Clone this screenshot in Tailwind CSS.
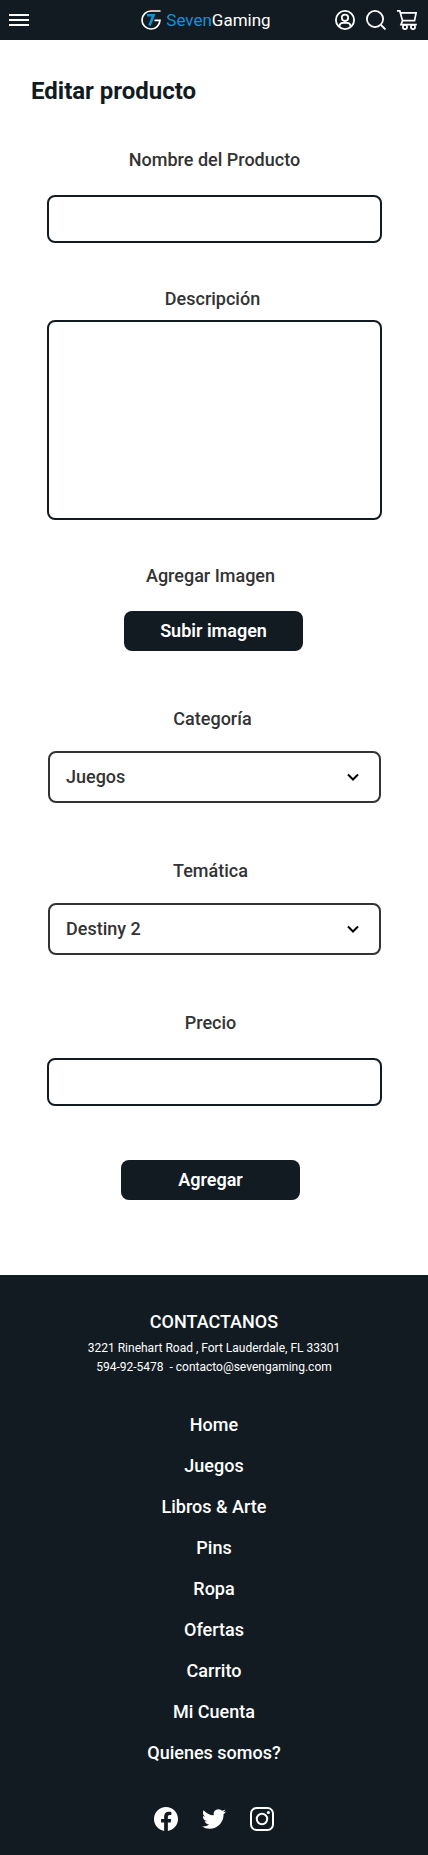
<!DOCTYPE html>
<html lang="es">
<head>
<meta charset="utf-8">
<meta name="viewport" content="width=device-width, initial-scale=1">
<title>SevenGaming - Editar producto</title>
<script src="https://cdn.jsdelivr.net/npm/@tailwindcss/browser@4"></script>
</head>
<body class="bg-white font-['Roboto',sans-serif] text-lg/6 font-medium text-[#333333]">

<header class="grid h-10 grid-cols-[1fr_auto_1fr] items-center bg-[#131b22] pr-[11px] pl-[9px] text-white">
  <button type="button" aria-label="Menú" class="flex h-5 w-5 items-center">
    <svg class="h-5 w-5" viewBox="0 0 20 20" fill="currentColor"><path d="M0 4h20v2H0zM0 9h20v2H0zM0 14h20v2H0z"/></svg>
  </button>
  <a href="#" class="flex items-center gap-[5px] pr-[14px] text-[17px]/6 font-normal">
    <svg class="h-5 w-5" viewBox="0 0 20 20" fill="none">
      <path d="M19.500 1H10a9 9 0 1 0 9 9.300H13.500" stroke="#fff" stroke-width="1.700"/>
      <path d="M6 5.300h6.500L8.500 15.500" stroke="#0d94d8" stroke-width="2.600"/>
    </svg>
    <span><span class="text-[#0d94d8]">Seven</span>Gaming</span>
  </a>
  <div class="flex justify-end gap-[11px]">
    <button type="button" aria-label="Mi cuenta">
      <svg class="block h-5 w-5" viewBox="0 0 20 20" fill="none" stroke="currentColor" stroke-width="1.800"><circle cx="10" cy="10" r="9.100"/><circle cx="10" cy="7.800" r="3.200"/><path d="M4.500 16.800v-.8a3.500 3.500 0 0 1 3.500-3.200h4a3.500 3.500 0 0 1 3.500 3.200v.8"/></svg>
    </button>
    <button type="button" aria-label="Buscar">
      <svg class="block h-5 w-5" viewBox="0 0 20 20" fill="none" stroke="currentColor" stroke-width="1.800"><circle cx="9" cy="9" r="8.100"/><path d="M15 15l4.500 4.500"/></svg>
    </button>
    <button type="button" aria-label="Carrito">
      <svg class="block h-5 w-5" viewBox="0 0 20 20" fill="none" stroke="currentColor" stroke-width="1.700"><path d="M0 .9h2.800l2.700 9.800h12l1.600-7.900H3.500M5.500 10.700l-1.500 3.900h15.800"/><circle cx="8" cy="17" r="2.100"/><circle cx="16" cy="17" r="2.100"/></svg>
    </button>
  </div>
</header>

<main class="pb-[75px]">
  <h1 class="pt-[35px] pl-[31px] text-2xl/8 font-bold text-[#131b22]">Editar producto</h1>

  <form class="flex flex-col pt-[41px] pr-[46px] pl-[47px] text-center">
    <label for="nombre">Nombre del Producto</label>
    <input id="nombre" type="text" class="mt-[23px] h-12 rounded-lg border-2 border-[#131b22] px-4">

    <label for="descripcion" class="mt-11 pr-1">Descripción</label>
    <textarea id="descripcion" class="mt-[9px] h-50 resize-none rounded-lg border-2 border-[#131b22] px-4 py-3"></textarea>

    <p class="mt-11 pr-2" id="imagen">Agregar Imagen</p>
    <div class="mt-[23px] flex justify-center pr-0.5">
      <button type="button" aria-describedby="imagen" class="h-10 w-[179px] rounded-lg bg-[#131b22] font-semibold text-white">Subir imagen</button>
    </div>

    <label for="categoria" class="mt-14 pr-1">Categoría</label>
    <div class="mx-px mt-5 grid items-center">
      <select id="categoria" class="col-start-1 row-start-1 h-[52px] appearance-none rounded-lg border-2 border-[#333333] px-4"><option>Juegos</option></select>
      <svg class="pointer-events-none col-start-1 row-start-1 mr-[22px] h-3 w-3 justify-self-end" viewBox="0 0 12 12" fill="none" stroke="#000" stroke-width="2"><path d="M1 3.500l5 5 5-5"/></svg>
    </div>

    <label for="tematica" class="mt-14 pr-2">Temática</label>
    <div class="mx-px mt-5 grid items-center">
      <select id="tematica" class="col-start-1 row-start-1 h-[52px] appearance-none rounded-lg border-2 border-[#333333] px-4"><option>Destiny 2</option></select>
      <svg class="pointer-events-none col-start-1 row-start-1 mr-[22px] h-3 w-3 justify-self-end" viewBox="0 0 12 12" fill="none" stroke="#000" stroke-width="2"><path d="M1 3.500l5 5 5-5"/></svg>
    </div>

    <label for="precio" class="mt-14 pr-2">Precio</label>
    <input id="precio" type="text" class="mt-[23px] h-12 rounded-lg border-2 border-[#131b22] px-4">

    <div class="mt-[54px] flex justify-center pr-2">
      <button type="submit" class="h-10 w-[179px] rounded-lg bg-[#131b22] font-semibold text-white">Agregar</button>
    </div>
  </form>
</main>

<footer class="flex flex-col items-center bg-[#131b22] pt-[35px] pb-6 text-center text-white">
  <h2>CONTACTANOS</h2>
  <address class="mt-[5px] text-xs/[19px] font-normal not-italic">
    <p>3221 Rinehart Road , Fort Lauderdale, FL 33301</p>
    <p>594-92-5478&nbsp; - <a href="mailto:contacto@sevengaming.com">contacto@sevengaming.com</a></p>
  </address>
  <nav class="mt-9 flex flex-col gap-[17px]">
    <a href="#">Home</a>
    <a href="#">Juegos</a>
    <a href="#">Libros &amp; Arte</a>
    <a href="#">Pins</a>
    <a href="#">Ropa</a>
    <a href="#">Ofertas</a>
    <a href="#">Carrito</a>
    <a href="#">Mi Cuenta</a>
    <a href="#">Quienes somos?</a>
  </nav>
  <div class="mt-[42px] flex gap-6">
    <a href="#" aria-label="Facebook"><svg class="block h-6 w-6" viewBox="0 0 24 24" fill="currentColor"><path d="M24 12.073c0-6.627-5.373-12-12-12s-12 5.373-12 12c0 5.990 4.388 10.954 10.125 11.854v-8.385H7.078v-3.470h3.047V9.430c0-3.007 1.792-4.669 4.533-4.669 1.312 0 2.686.235 2.686.235v2.953H15.830c-1.491 0-1.956.925-1.956 1.874v2.250h3.328l-.532 3.470h-2.796v8.385C19.612 23.027 24 18.062 24 12.073z"/></svg></a>
    <a href="#" aria-label="Twitter"><svg class="block h-6 w-6" viewBox="0 0 24 24" fill="currentColor"><path d="M23.953 4.570a10 10 0 0 1-2.825.775 4.958 4.958 0 0 0 2.163-2.723c-.951.555-2.005.959-3.127 1.184a4.920 4.920 0 0 0-8.384 4.482C7.690 8.095 4.067 6.130 1.640 3.162a4.822 4.822 0 0 0-.666 2.475c0 1.710.870 3.213 2.188 4.096a4.904 4.904 0 0 1-2.228-.616v.060a4.923 4.923 0 0 0 3.946 4.827 4.996 4.996 0 0 1-2.212.085 4.936 4.936 0 0 0 4.604 3.417 9.867 9.867 0 0 1-6.102 2.105c-.390 0-.779-.023-1.170-.067a13.995 13.995 0 0 0 7.557 2.209c9.053 0 13.998-7.496 13.998-13.985 0-.210 0-.420-.015-.630A9.935 9.935 0 0 0 24 4.590z"/></svg></a>
    <a href="#" aria-label="Instagram"><svg class="block h-6 w-6" viewBox="0 0 24 24" fill="none" stroke="currentColor" stroke-width="2"><rect x="1" y="1" width="22" height="22" rx="5.500"/><circle cx="12" cy="12" r="5.200"/><circle cx="18.400" cy="5.600" r="1.500" fill="currentColor" stroke="none"/></svg></a>
  </div>
</footer>
</body>
</html>
